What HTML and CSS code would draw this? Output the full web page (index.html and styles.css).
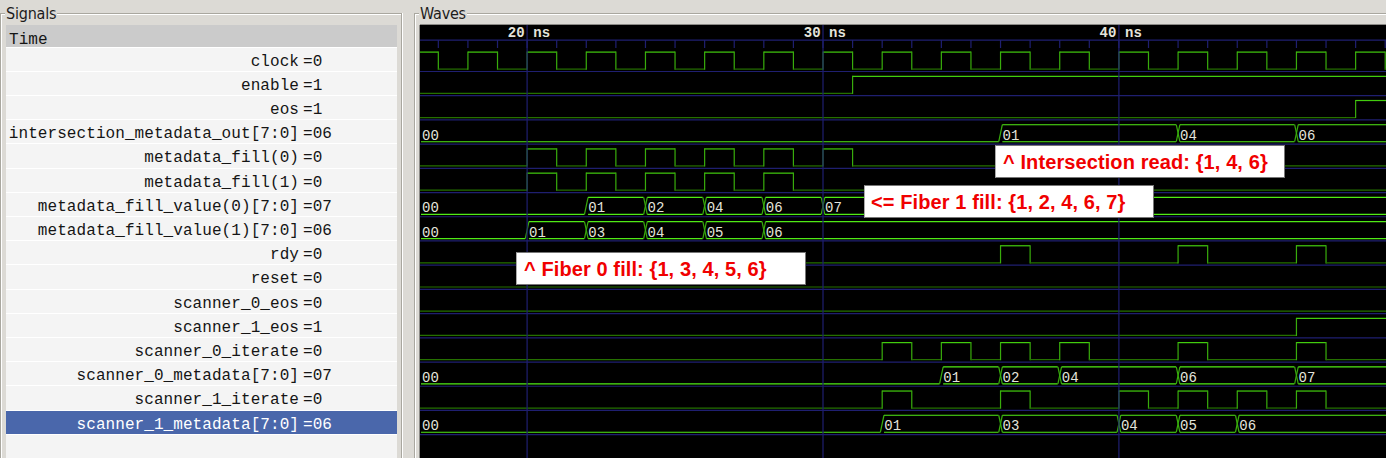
FILE: index.html
```html
<!DOCTYPE html>
<html lang="en">
<head>
<meta charset="utf-8">
<title>Waveform viewer</title>
<link rel="stylesheet" href="styles.css">
</head>
<body>
<main class="viewer">
  <fieldset class="panel signals">
    <legend>Signals</legend>
    <div class="list">
      <div class="list-head">Time</div>
      <div class="rows" id="rows"></div>
    </div>
  </fieldset>
  <fieldset class="panel waves">
    <legend>Waves</legend>
    <div class="canvas">
      <svg id="plot" class="plot" width="966" height="433" viewBox="420 25 966 433"></svg>
      <div class="note note-read">^ Intersection read: {1, 4, 6}</div>
      <div class="note note-fiber1">&lt;= Fiber 1 fill: {1, 2, 4, 6, 7}</div>
      <div class="note note-fiber0">^ Fiber 0 fill: {1, 3, 4, 5, 6}</div>
    </div>
  </fieldset>
</main>
<script src="waves.js"></script>
</body>
</html>
```
FILE: styles.css
```css
* { box-sizing: border-box; }
body {
  margin: 0;
  width: 1387px;
  height: 459px;
  overflow: hidden;
  background: #fff;
}
.viewer {
  display: flex;
  gap: 11px;
  width: 1386px;
  height: 458px;
  overflow: hidden;
  background: #dcdad5;
}
.panel {
  position: relative;
  flex: none;
  margin: 0;
  min-width: 0;
  height: 470px;
  border: 0;
  padding: 3px 0 0 6px;
}
.panel::before {
  content: "";
  position: absolute;
  z-index: 0;
  inset: 13px 0 0 0;
  border: 1px solid #a9a79f;
  box-shadow: inset 1px 1px #fff, 1px 0 #fff;
}
.signals { width: 402px; }
.waves { width: 973px; margin-left: 1px; }
.waves::before { right: -4px; }
legend {
  position: relative;
  z-index: 1;
  display: block;
  float: left;
  height: 21px;
  margin: 1px 0 0 -1px;
  padding: 0 1px 0 1px;
  background: #dcdad5;
  color: #1c1c1c;
  font: 16px/20px "DejaVu Sans Condensed", "DejaVu Sans", sans-serif;
  font-stretch: condensed;
  letter-spacing: -0.2px;
}
.list {
  position: relative;
  clear: both;
  width: 391px;
  height: 433px;
  overflow: hidden;
  background: #f4f4f4;
  font: 16px/24px "Liberation Mono", monospace;
  letter-spacing: 0.07px;
  color: #151515;
}
.list-head {
  height: 23px;
  padding-left: 3px;
  line-height: 30px;
  background: #cbcbcb;
}
.rows { box-shadow: 0 -1px #fff; margin-top: -0.4px; }
.row {
  display: grid;
  grid-template-columns: 293px 1fr;
  column-gap: 4px;
  height: 24.21px;
  line-height: 29px;
  border-bottom: 1px solid #fff;
}
.name { text-align: right; white-space: nowrap; }
.selected { background: #4a67ab; color: #fff; }
.canvas {
  position: relative;
  z-index: 2;
  clear: both;
  width: 966px;
  height: 433px;
  overflow: hidden;
  background: #000;
  box-shadow: 0 -1px #8b8a86, -1px 0 #8b8a86;
}
.plot { display: block; }
.plot path { fill: none; stroke-width: 1.21; }
.grid { stroke: #1f1f70; }
.low { stroke: #257000; }
.high { stroke: #42cc0e; }
.edge { stroke: #38ac0c; }
.bus { stroke: #50ea16; }
.digits {
  font: 14px "Liberation Mono", monospace;
  letter-spacing: 0.07px;
  fill: #e4e4dc;
}
.tick-label { font-weight: bold; }
.note {
  position: absolute;
  width: 290px;
  height: 33px;
  padding-left: 8px;
  background: #fff;
  border: 1px solid #777;
  border-left-color: #aaa;
  color: #f00000;
  font: bold 20px/32px "Liberation Sans", Arial, sans-serif;
  letter-spacing: 0.1px;
  white-space: pre;
}
.note-read { left: 575px; top: 120px; padding-left: 7px; }
.note-fiber1 { left: 444px; top: 160px; padding-left: 6px; }
.note-fiber0 { left: 96px; top: 227px; padding-left: 7px; }
```
FILE: waves.js
```javascript
// Times are in clock half-periods counted from the 20 ns mark.
const pulses = (...starts) => starts.flatMap(t => [t, t + 1]);
const signals = [
  { name: "clock", value: "0", start: 1, toggles: Array.from({ length: 33 }, (_, i) => i - 3) },
  { name: "enable", value: "1", toggles: [11] },
  { name: "eos", value: "1", toggles: [28] },
  { name: "intersection_metadata_out[7:0]", value: "06", bus: [[16, "01"], [22, "04"], [26, "06"]] },
  { name: "metadata_fill(0)", value: "0", toggles: pulses(0, 2, 4, 6, 8, 10) },
  { name: "metadata_fill(1)", value: "0", toggles: pulses(0, 2, 4, 6, 8) },
  { name: "metadata_fill_value(0)[7:0]", value: "07", bus: [[2, "01"], [4, "02"], [6, "04"], [8, "06"], [10, "07"]] },
  { name: "metadata_fill_value(1)[7:0]", value: "06", bus: [[0, "01"], [2, "03"], [4, "04"], [6, "05"], [8, "06"]] },
  { name: "rdy", value: "0", toggles: pulses(16, 22, 26) },
  { name: "reset", value: "0", toggles: [] },
  { name: "scanner_0_eos", value: "0", toggles: [] },
  { name: "scanner_1_eos", value: "1", toggles: [26] },
  { name: "scanner_0_iterate", value: "0", toggles: pulses(12, 14, 16, 18, 22, 26) },
  { name: "scanner_0_metadata[7:0]", value: "07", bus: [[14, "01"], [16, "02"], [18, "04"], [22, "06"], [26, "07"]] },
  { name: "scanner_1_iterate", value: "0", toggles: pulses(12, 16, 20, 22, 24, 26) },
  { name: "scanner_1_metadata[7:0]", value: "06", selected: true, bus: [[12, "01"], [16, "03"], [20, "04"], [22, "05"], [24, "06"]] }
];

document.getElementById("rows").innerHTML = signals.map(s =>
  `<div class="row${s.selected ? " selected" : ""}"><span class="name">${s.name}</span><span>=${s.value}</span></div>`
).join("");

const LEFT = 420, RIGHT = 1386, PITCH = 24.21;
const at = t => 527.1 + 29.59 * t;
const out = [];
const line = (cls, d) => out.push(`<path class="${cls}" d="${d}"/>`);
const text = (x, y, s, extra = "") => out.push(`<text class="digits ${extra}" x="${x}" y="${y}">${s}</text>`);

line("grid", `M${LEFT} 40.2H${RIGHT}`);
for (let t = -3; t <= 29; t++) line("grid", `M${at(t)} 40V48`);
signals.forEach((_, i) => line("grid", `M${LEFT} ${71.5 + i * PITCH}H${RIGHT}`));

signals.forEach((s, i) => {
  const hi = 52.1 + i * PITCH, lo = 69.1 + i * PITCH;
  if (s.bus) {
    const first = at(s.bus[0][0]);
    line("bus", `M421 ${lo}H${first - 1.8}`);
    text(422, lo - 2, "00");
    s.bus.forEach(([t, v], k) => {
      const x = at(t), next = s.bus[k + 1];
      const end = next ? at(next[0]) - 2 : RIGHT;
      line("edge", `M${x - 1.8} ${lo}L${x + 1.8} ${hi}`);
      if (k) line("edge", `M${x - 1.8} ${hi}L${x + 1.8} ${lo}`);
      line("bus", `M${x + 1.8} ${hi}H${end}M${x + 1.8} ${lo}H${end}`);
      text(x + 2, lo - 2, v);
    });
  } else {
    let level = s.start || 0, x = LEFT;
    for (const t of [...s.toggles, null]) {
      const nx = t === null ? RIGHT : Math.min(at(t), RIGHT);
      line(level ? "high" : "low", `M${x} ${level ? hi : lo}H${nx}`);
      if (t !== null) line("edge", `M${nx} ${hi - 0.6}V${lo + 0.6}`);
      level = 1 - level;
      x = nx;
    }
  }
});

[[0, "20"], [10, "30"], [20, "40"]].forEach(([t, n]) => {
  line("grid", `M${at(t)} 25V458`);
  text(at(t) - 19.3, 37, n + " ns", "tick-label");
});
document.getElementById("plot").innerHTML = out.join("");
```
